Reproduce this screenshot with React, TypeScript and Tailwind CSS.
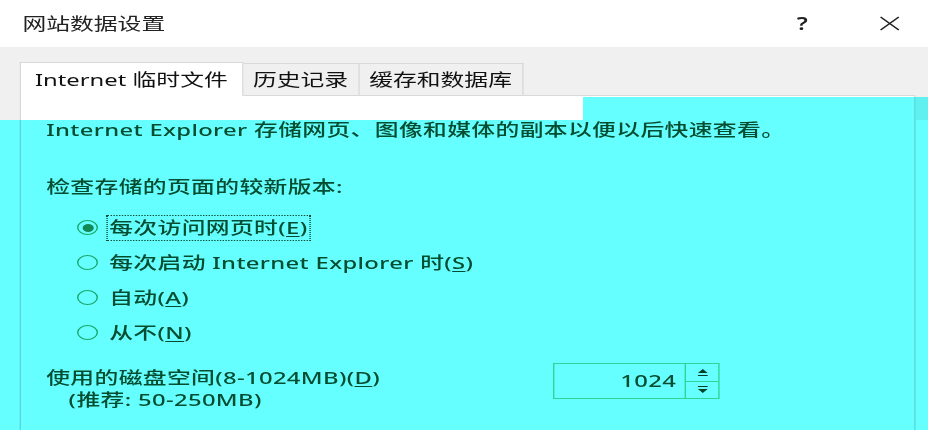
import type { ReactNode } from 'react';

// Mnemonic letter, underlined like a Win32 access key
function Key({ children }: { children: ReactNode }) {
    return <span className="underline underline-offset-2">{children}</span>;
}

function Radio({ checked, focused, children }: { checked?: boolean; focused?: boolean; children: ReactNode }) {
    return (
        <div className="flex h-[35px] items-center pl-[22px]">
            <span className="flex h-[15px] w-[15px] items-center justify-center rounded-full border-[1.5px] border-[#3aa86a]">
                {checked && <span className="h-[8px] w-[8px] rounded-full bg-[#2a8a56]" />}
            </span>
            <span
                className={`ml-[6px] px-[1px] leading-[24px] ${
                    focused ? 'border border-dotted border-[#0a4d30]' : 'border border-transparent'
                }`}
            >
                {children}
            </span>
        </div>
    );
}

function SpinBox({ value }: { value: number }) {
    return (
        <div className="flex h-[36px] w-[119px] border border-[#70d696] bg-white">
            <div className="flex flex-1 items-center justify-end pr-[6px] text-[17px]">{value}</div>
            <div className="flex w-[24px] flex-col border-l border-[#70d696]">
                <div className="flex flex-1 items-center justify-center border-b border-[#70d696]">
                    <svg width="10" height="9" viewBox="0 0 10 9">
                        <path d="M5 1 L8.5 5 L1.5 5 Z" fill="#0a4028" />
                        <path d="M1.5 7.5 H8.5" stroke="#0a4028" strokeWidth="1.2" />
                    </svg>
                </div>
                <div className="flex flex-1 items-center justify-center">
                    <svg width="10" height="9" viewBox="0 0 10 9">
                        <path d="M1.5 1.5 H8.5" stroke="#0a4028" strokeWidth="1.2" />
                        <path d="M1.5 4 L8.5 4 L5 8 Z" fill="#0a4028" />
                    </svg>
                </div>
            </div>
        </div>
    );
}

function Tab({ active, children }: { active?: boolean; children: ReactNode }) {
    if (active) {
        return (
            <div className="relative z-10 -mb-px flex h-[34px] items-center border border-b-0 border-[#d9d9d9] bg-white px-[10px]">
                {children}
            </div>
        );
    }
    return (
        <div className="flex h-[32px] items-center border border-l-0 border-b-0 border-[#d9d9d9] bg-[#f0f0f0] px-[7px]">
            {children}
        </div>
    );
}

export default function App() {
    return (
        <div className="relative h-[430px] w-[928px] overflow-hidden bg-white font-['Noto_Sans','Noto_Sans_CJK_SC',sans-serif] text-[17px] text-[#111]">
            {/* dialog is laid out narrow and stretched to full width */}
            <div className="h-[430px] w-[663px] origin-top-left scale-x-[1.4]">
                <div className="flex h-[47px] items-center bg-white pl-[16px] text-[#222]">
                    <span className="flex-1">网站数据设置</span>
                    <span className="w-[20px] text-center text-[17px] font-semibold">?</span>
                    <span className="ml-[44px] mr-[20px] flex w-[16px] justify-center">
                        <svg width="15" height="15" viewBox="0 0 15 15">
                            <path d="M1 1 L14 14 M14 1 L1 14" stroke="#222" strokeWidth="1.1" />
                        </svg>
                    </span>
                </div>

                <div className="flex h-[383px] flex-col bg-[linear-gradient(#f0f0f0_73px,#fff_73px)]">
                    <div className="flex items-end pl-[14px] pt-[15px]">
                        <Tab active>Internet 临时文件</Tab>
                        <Tab>历史记录</Tab>
                        <Tab>缓存和数据库</Tab>
                    </div>

                    <div className="ml-[14px] h-[400px] w-[640px] shrink-0 border border-[#d9d9d9] bg-white pl-[18px] pt-[22px] font-medium tracking-[0.25px] text-[#0a4d30]">
                        <div className="leading-[24px]">Internet Explorer 存储网页、图像和媒体的副本以便以后快速查看。</div>
                        <div className="mt-[33px] leading-[24px]">检查存储的页面的较新版本:</div>

                        <div className="mt-[11px]">
                            <Radio checked focused>
                                每次访问网页时(<Key>E</Key>)
                            </Radio>
                            <Radio>
                                每次启动 Internet Explorer 时(<Key>S</Key>)
                            </Radio>
                            <Radio>
                                自动(<Key>A</Key>)
                            </Radio>
                            <Radio>
                                从不(<Key>N</Key>)
                            </Radio>
                        </div>

                        <div className="mt-[13px] flex">
                            <div className="w-[362px] pt-[4px]">
                                <div className="leading-[22px]">
                                    使用的磁盘空间(8-1024MB)(<Key>D</Key>)
                                </div>
                                <div className="pl-[16px] leading-[22px]">(推荐: 50-250MB)</div>
                            </div>
                            <SpinBox value={1024} />
                        </div>
                    </div>
                </div>
            </div>

            {/* cyan highlight laid over the tab page */}
            <div className="pointer-events-none absolute left-0 right-0 top-[120px] bottom-0 bg-[#66ffff] mix-blend-multiply" />
            <div className="pointer-events-none absolute left-[583px] right-0 top-[97px] h-[23px] bg-[#66ffff] mix-blend-multiply" />
        </div>
    );
}
